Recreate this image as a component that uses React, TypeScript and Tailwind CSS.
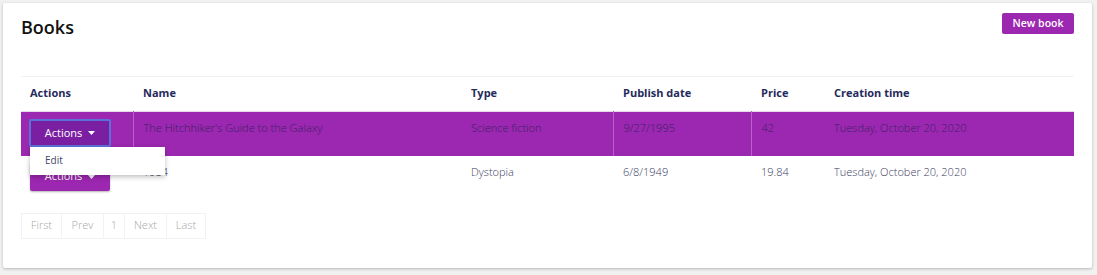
import React from "react";

const font = { fontFamily: '"Open Sans", "Noto Sans", sans-serif' };

function Caret() {
  return (
    <svg width="7" height="4" viewBox="0 0 7 4" className="ml-[6px] inline-block">
      <path d="M0 0 L7 0 L3.5 4 Z" fill="white" />
    </svg>
  );
}

export default function App() {
  const rows = [
    { name: "The Hitchhiker's Guide to the Galaxy", type: "Science fiction", date: "9/27/1995", price: "42", created: "Tuesday, October 20, 2020" },
    { name: "1984", type: "Dystopia", date: "6/8/1949", price: "19.84", created: "Tuesday, October 20, 2020" },
  ];
  return (
    <div className="min-h-[275px] w-[1097px] bg-[#f1f1f1] pl-[3px] pt-[3px]" style={font}>
      <div className="h-[265px] w-[1089px] rounded-[2px] bg-white px-[18px] pt-[10px] shadow-[0_1px_3px_rgba(0,0,0,0.25)]">
        <div className="flex items-start justify-between">
          <div className="pt-[1px] text-[18px] leading-[27px] font-semibold text-[#111]">Books</div>
          <button className="h-[21px] w-[72px] rounded-[2px] bg-[#9c27b0] text-[10.5px] font-semibold text-white">New book</button>
        </div>
        <div className="relative mt-[35px]">
          <table className="w-[1053px] table-fixed border-collapse text-[11px]">
            <colgroup>
              <col className="w-[112px]" />
              <col className="w-[328px]" />
              <col className="w-[152px]" />
              <col className="w-[138px]" />
              <col className="w-[73px]" />
              <col />
            </colgroup>
            <thead>
              <tr className="h-[35px] border-t border-b border-t-[#f2f2f2] border-b-[#e6dbea] text-left text-[#252a5c]">
                <th className="pl-[9px] pb-[1px] font-bold">Actions</th>
                <th className="pl-[10px] pb-[1px] font-bold">Name</th>
                <th className="pl-[10px] pb-[1px] font-bold">Type</th>
                <th className="pl-[10px] pb-[1px] font-bold">Publish date</th>
                <th className="pl-[10px] pb-[1px] font-bold">Price</th>
                <th className="pl-[10px] pb-[1px] font-bold">Creation time</th>
              </tr>
            </thead>
            <tbody>
              {rows.map((r, i) => {
                const hl = i === 0;
                return (
                  <tr key={i} className={`h-[44px] align-top ${hl ? "bg-[#9c27b0] text-[#3a2266]" : "bg-white text-[#3a3c62]"}`}>
                    <td className="pl-[8px] pt-[7px]">
                      {hl ? (
                        <button className="flex h-[28px] w-[82px] items-center justify-center rounded-[2px] border-2 border-[#5d6fd8] bg-[#7b1fa2] text-[11px] text-white">
                          Actions
                          <Caret />
                        </button>
                      ) : (
                        <button className="ml-[1px] flex h-[28px] w-[80px] items-center justify-center rounded-[2px] bg-[#9c27b0] text-[11px] text-white shadow-[0_1px_2px_rgba(0,0,0,0.3)]">
                          Actions
                          <Caret />
                        </button>
                      )}
                    </td>
                    <td className={`pl-[10px] pt-[8px] font-light ${hl ? "border-l border-[#b862c9]" : ""}`}>{r.name}</td>
                    <td className="pl-[10px] pt-[8px] font-light">{r.type}</td>
                    <td className={`pl-[10px] pt-[8px] font-light ${hl ? "border-l border-[#b862c9]" : ""}`}>{r.date}</td>
                    <td className={`pl-[10px] pt-[8px] font-light ${hl ? "border-l border-[#b862c9]" : ""}`}>{r.price}</td>
                    <td className="pl-[10px] pt-[8px] font-light">{r.created}</td>
                  </tr>
                );
              })}
            </tbody>
          </table>
          <div className="absolute left-[9px] top-[71px] h-[28px] w-[135px] bg-white shadow-[0_2px_5px_rgba(0,0,0,0.25)]">
            <div className="pl-[15px] pt-[6px] text-[10px] font-medium text-[#444866]">Edit</div>
          </div>
          <div className="mt-[13px] flex h-[26px] w-fit border border-[#f2f2f2] text-[11px] font-light text-[#a8a8a8]">
            <div className="flex w-[40px] items-center justify-center border-r border-[#f2f2f2]">First</div>
            <div className="flex w-[42px] items-center justify-center border-r border-[#f2f2f2]">Prev</div>
            <div className="flex w-[21px] items-center justify-center border-r border-[#f2f2f2]">1</div>
            <div className="flex w-[42px] items-center justify-center border-r border-[#f2f2f2]">Next</div>
            <div className="flex w-[38px] items-center justify-center">Last</div>
          </div>
        </div>
      </div>
    </div>
  );
}
